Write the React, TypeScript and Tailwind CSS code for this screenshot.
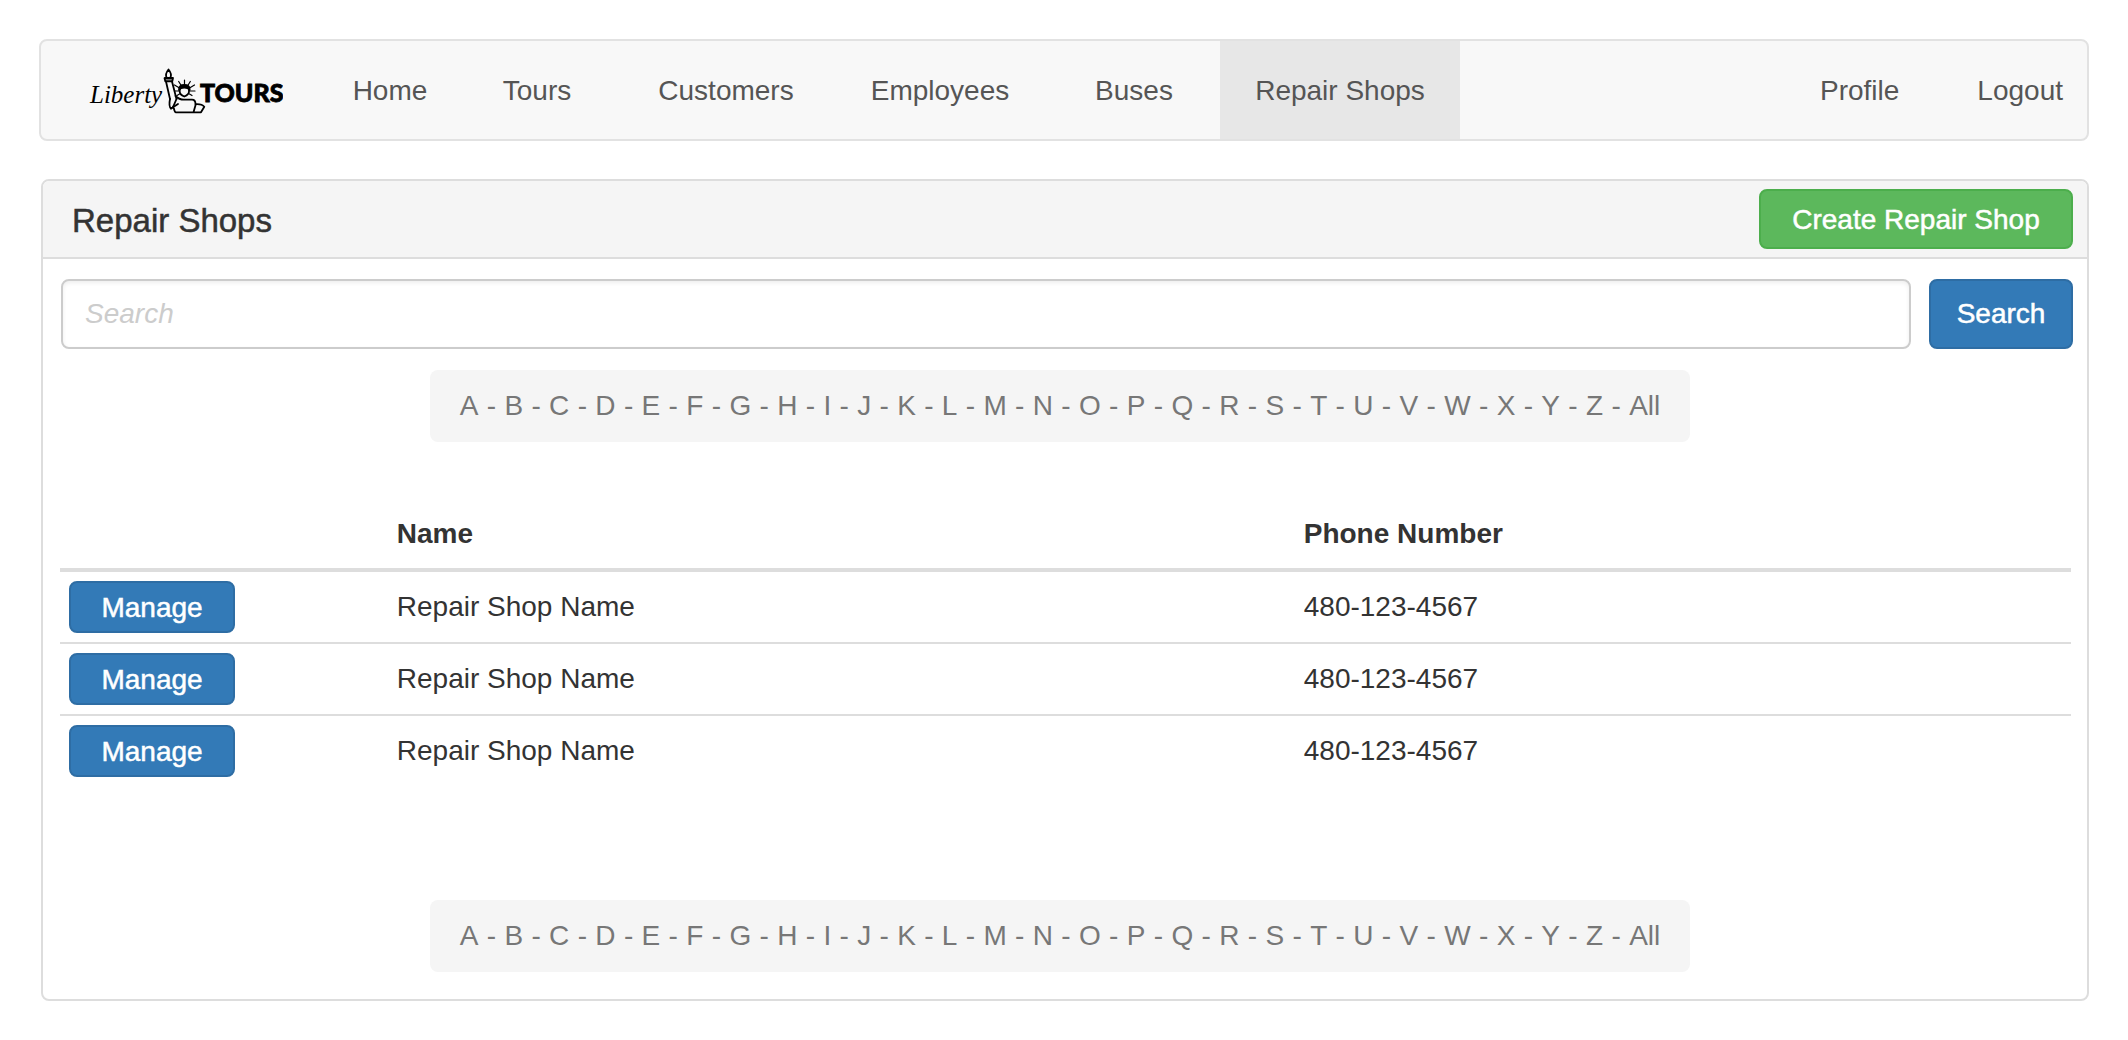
const LETTERS = [..."ABCDEFGHIJKLMNOPQRSTUVWXYZ", "All"];

const NAV_LINKS = [
  { label: "Home", width: "w-32" },
  { label: "Tours", width: "w-[166px]" },
  { label: "Customers", width: "w-53" },
  { label: "Employees", width: "w-54" },
  { label: "Buses", width: "w-43" },
  { label: "Repair Shops", width: "w-60", active: true },
];

const SHOPS = [
  { id: 1, name: "Repair Shop Name", phone: "480-123-4567" },
  { id: 2, name: "Repair Shop Name", phone: "480-123-4567" },
  { id: 3, name: "Repair Shop Name", phone: "480-123-4567" },
];

function Logo() {
  return (
    <svg width="196" height="50" viewBox="88 66 196 50" role="img" aria-label="Liberty Tours">
      <text x="91" y="104" fontFamily="'Liberation Serif', serif" fontStyle="italic" fontSize="25">
        Liberty
      </text>
      <text
        x="201"
        y="103"
        fontFamily="Lato, sans-serif"
        fontWeight="900"
        fontSize="25"
        stroke="#000"
        strokeWidth="0.8"
      >
        TOURS
      </text>
      <g fill="none" stroke="#000" strokeWidth="1.8" strokeLinejoin="round" strokeLinecap="round">
        {/* Torch and raised arm */}
        <path d="M169.500 70.500c2.500 3 3.300 5.500 1.800 8.300h-3.600c-1.500-2.800-.7-5.300 1.800-8.300z" />
        <path d="M165.500 79h8.500l-.7 3.300h-7z" fill="#777" />
        <path d="M167 82.500l4 17.500M173 82.500l4.500 17.500" />
        <path d="M171 100c-.8 4-1.500 7.500 1 9.500 1.200-.2 2-1 2.500-2.500l3-7" />
        {/* Robe and tablet */}
        <path d="M176.500 97c2.500 2.500 5 3.700 8.500 3.700h8c2.500 0 3.500 1.600 3.500 4.500" />
        <path d="M174.500 107.500c.5 3 1 5.800 2.500 5.800h25l3.300-5.500c-2-2.500-5-2.800-8.500-2.600l-2.300 8M172 109.500l7-4.500" />
        {/* Face, hair and crown */}
        <path d="M180.700 88.500v4c0 2.500 2 4 4.600 5 2.600-1 4.700-2.500 4.700-5v-4" />
        <path d="M180 91c0-3.500 2-5 5.300-5s5.400 1.500 5.400 5c-1-2-2.500-2.500-5.400-2.500S181 89 180 91z" fill="#000" />
        <path
          d="M185.500 86v-5M182.500 87l-2.800-4.500M188.500 87l2.800-4.500M180.500 89l-5-3M190.500 89l5-3M179.500 92h-3.500M191.500 92h4.500M180.500 95l-2.500 1.500M190.500 95l2.500 1.500"
          strokeWidth="1.2"
        />
      </g>
    </svg>
  );
}

function LetterFilter({ label }: { label: string }) {
  return (
    <nav
      aria-label={label}
      className="mr-3.5 flex gap-2 self-center rounded-lg bg-[#f5f5f5] px-[30px] py-4 leading-10 text-[#777]"
    >
      {LETTERS.map((letter, i) => (
        <span key={letter} className="flex gap-2">
          {i > 0 && <span className="w-2.5 text-center">-</span>}
          <a href={`#${letter}`}>{letter}</a>
        </span>
      ))}
    </nav>
  );
}

export default function App() {
  return (
    <div className="bg-white p-[39px] font-['Liberation_Sans',Arial,sans-serif] text-[28px] text-[#333]">
      <header className="flex items-stretch rounded-lg border-2 border-[#e2e2e2] bg-[#f8f8f8] text-[#555]">
        <a href="#home" className="mr-[43px] ml-[46px] flex items-center">
          <Logo />
        </a>
        <nav aria-label="Main" className="flex flex-1">
          {NAV_LINKS.map((link) => (
            <a
              key={link.label}
              href={`#${link.label}`}
              aria-current={link.active ? "page" : undefined}
              className={`flex h-[98px] items-center justify-center pt-0.5 ${link.width} ${link.active ? "bg-[#e7e7e7]" : ""}`}
            >
              {link.label}
            </a>
          ))}
        </nav>
        <nav aria-label="Account" className="flex items-center gap-[78px] pt-0.5 pr-6">
          <a href="#profile">Profile</a>
          <a href="#logout">Logout</a>
        </nav>
      </header>

      <main className="mt-[38px] ml-0.5 rounded-lg border-2 border-[#ddd]">
        <div className="flex items-center justify-between rounded-t-md border-b-2 border-[#ddd] bg-[#f5f5f5] py-2 pr-3.5 pl-[29px]">
          <h1 className="pt-1 text-[33px] leading-10 [-webkit-text-stroke:0.5px]">Repair Shops</h1>
          <button className="h-15 w-[314px] rounded-lg border-2 border-[#4cae4c] bg-[#5cb85c] pt-0.5 text-white [-webkit-text-stroke:0.5px]">
            Create Repair Shop
          </button>
        </div>

        <div className="flex flex-col pt-5 pr-3.5 pb-[27px] pl-[18px]">
          <form className="flex gap-[18px]" onSubmit={(e) => e.preventDefault()}>
            <input
              type="search"
              aria-label="Search"
              placeholder="Search"
              className="h-[70px] min-w-0 flex-1 rounded-lg border-2 border-[#ccc] px-[22px] shadow-[inset_0_2px_4px_rgba(0,0,0,0.07)] placeholder:text-[#ccc] placeholder:italic"
            />
            <button className="w-36 rounded-lg border-2 border-[#2e6da4] bg-[#337ab7] text-white [-webkit-text-stroke:0.5px]">
              Search
            </button>
          </form>

          <div className="mt-[21px] flex flex-col">
            <LetterFilter label="Filter by letter" />
          </div>

          <div className="mt-14 mr-0.5 -ml-px">
            <table className="w-full table-fixed border-separate border-spacing-0 text-left">
              <colgroup>
                <col className="w-[16.3%]" />
                <col className="w-[45.1%]" />
                <col />
              </colgroup>
              <thead>
                <tr className="h-[74px] *:border-b-4 *:border-[#ddd] *:px-[9px] *:pt-0.5">
                  <td />
                  <th>Name</th>
                  <th>Phone Number</th>
                </tr>
              </thead>
              <tbody>
                {SHOPS.map((shop) => (
                  <tr key={shop.id} className="h-[72px] *:border-[#ddd] *:px-[9px] last:h-[70px] not-last:*:border-b-2">
                    <td>
                      <button className="block h-[52px] w-[166px] rounded-lg border-2 border-[#2e6da4] bg-[#337ab7] pt-0.5 text-white [-webkit-text-stroke:0.5px]">
                        Manage
                      </button>
                    </td>
                    <td>{shop.name}</td>
                    <td>{shop.phone}</td>
                  </tr>
                ))}
              </tbody>
            </table>
          </div>

          <div className="mt-[114px] flex flex-col">
            <LetterFilter label="Filter by letter, bottom" />
          </div>
        </div>
      </main>
    </div>
  );
}
